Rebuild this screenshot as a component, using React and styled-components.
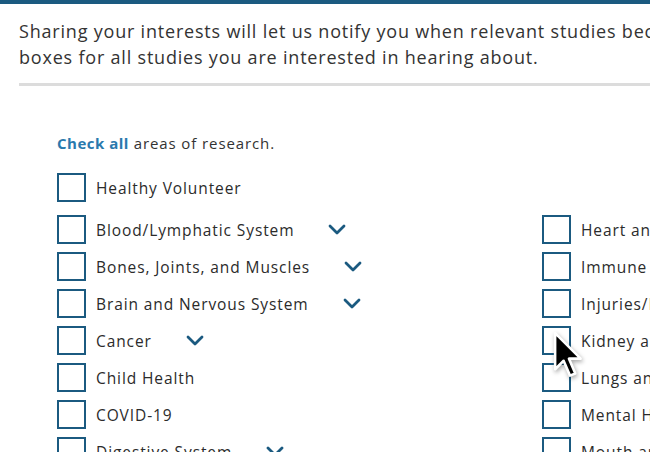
import styled, { createGlobalStyle } from "styled-components"

const GlobalStyle = createGlobalStyle`
    body {
        margin: 0;
        background: #fff;
        font-family: 'Open Sans', 'Liberation Sans', sans-serif;
        color: #2b2b2b;
        overflow: hidden;
    }
`

const leftColumn = [
    { label: "Blood/Lymphatic System", more: true },
    { label: "Bones, Joints, and Muscles", more: true },
    { label: "Brain and Nervous System", more: true },
    { label: "Cancer", more: true },
    { label: "Child Health" },
    { label: "COVID-19" },
    { label: "Digestive System", more: true },
]

const rightColumn = [
    { label: "Heart and Vascular System", more: true },
    { label: "Immune System", more: true },
    { label: "Injuries/Emergency Medicine" },
    { label: "Kidney and Urinary System", more: true },
    { label: "Lungs and Breathing", more: true },
    { label: "Mental Health", more: true },
    { label: "Mouth and Teeth" },
]

function Chevron() {
    return (
        <svg width="18" height="11" viewBox="0 0 18 11">
            <path d="M2 2 L9 9 L16 2" fill="none" stroke="#1b5a80" strokeWidth="2.8" strokeLinecap="round" strokeLinejoin="round" />
        </svg>
    )
}

function Interest({ label, more }) {
    return (
        <Row>
            <Box />
            <Label>{label}</Label>
            {more && <Toggle><Chevron /></Toggle>}
        </Row>
    )
}

export default function App() {
    return (
        <Page>
            <GlobalStyle />
            <TopBar />
            <Content>
                <Intro>
                    Sharing your interests will let us notify you when relevant studies become available. Check the
                    <br />
                    boxes for all studies you are interested in hearing about.
                </Intro>
                <Divider />
                <Areas>
                    <CheckAll><a>Check all</a> areas of research.</CheckAll>
                    <Interest label="Healthy Volunteer" />
                    <Columns>
                        <Column>
                            {leftColumn.map(item => <Interest key={item.label} {...item} />)}
                        </Column>
                        <Column>
                            {rightColumn.map(item => <Interest key={item.label} {...item} />)}
                        </Column>
                    </Columns>
                </Areas>
            </Content>
            <Pointer width="34" height="51" viewBox="0 0 16 24">
                <path d="M1 1 L1 18 L5 14 L8 21 L10.5 20 L7.5 13 L13 13 Z" fill="#000" stroke="#fff" strokeWidth="1.2" strokeLinejoin="round" />
            </Pointer>
        </Page>
    )
}

const Page = styled.div`
    position: relative;
    width: 650px;
    height: 452px;
    overflow: hidden;
`
const TopBar = styled.div`
    height: 4px;
    background: #1b5a80;
`
const Content = styled.div`
    padding: 0 0 0 19px;
    width: 1000px;
`
const Intro = styled.p`
    margin: 14px 0 0;
    font-size: 18px;
    line-height: 26px;
    letter-spacing: 0.8px;
    color: #333;
    white-space: nowrap;
`
const Divider = styled.div`
    height: 3px;
    background: #dcdcdc;
    margin-top: 13px;
`
const Areas = styled.div`
    padding: 47px 0 0 38px;
`
const CheckAll = styled.div`
    font-size: 15px;
    line-height: 20px;
    letter-spacing: 0.9px;
    color: #333;
    margin-bottom: 20px;
    a {
        color: #2a79ad;
        font-weight: 700;
        letter-spacing: 0.5px;
    }
`
const Columns = styled.div`
    display: grid;
    grid-template-columns: 485px 485px;
    margin-top: 13px;
`
const Column = styled.div`
    display: flex;
    flex-direction: column;
    gap: 8px;
`
const Row = styled.div`
    display: flex;
    align-items: center;
    height: 29px;
`
const Box = styled.span`
    box-sizing: border-box;
    width: 29px;
    height: 29px;
    border: 2px solid #1b5a80;
    flex-shrink: 0;
`
const Label = styled.span`
    margin-left: 10px;
    font-size: 15.5px;
    letter-spacing: 0.9px;
    color: #2b2b2b;
    white-space: nowrap;
`
const Toggle = styled.span`
    display: flex;
    margin-left: 34px;
`
const Pointer = styled.svg`
    position: absolute;
    left: 553px;
    top: 331px;
    filter: drop-shadow(1px 2px 2px rgba(0, 0, 0, 0.35));
`
